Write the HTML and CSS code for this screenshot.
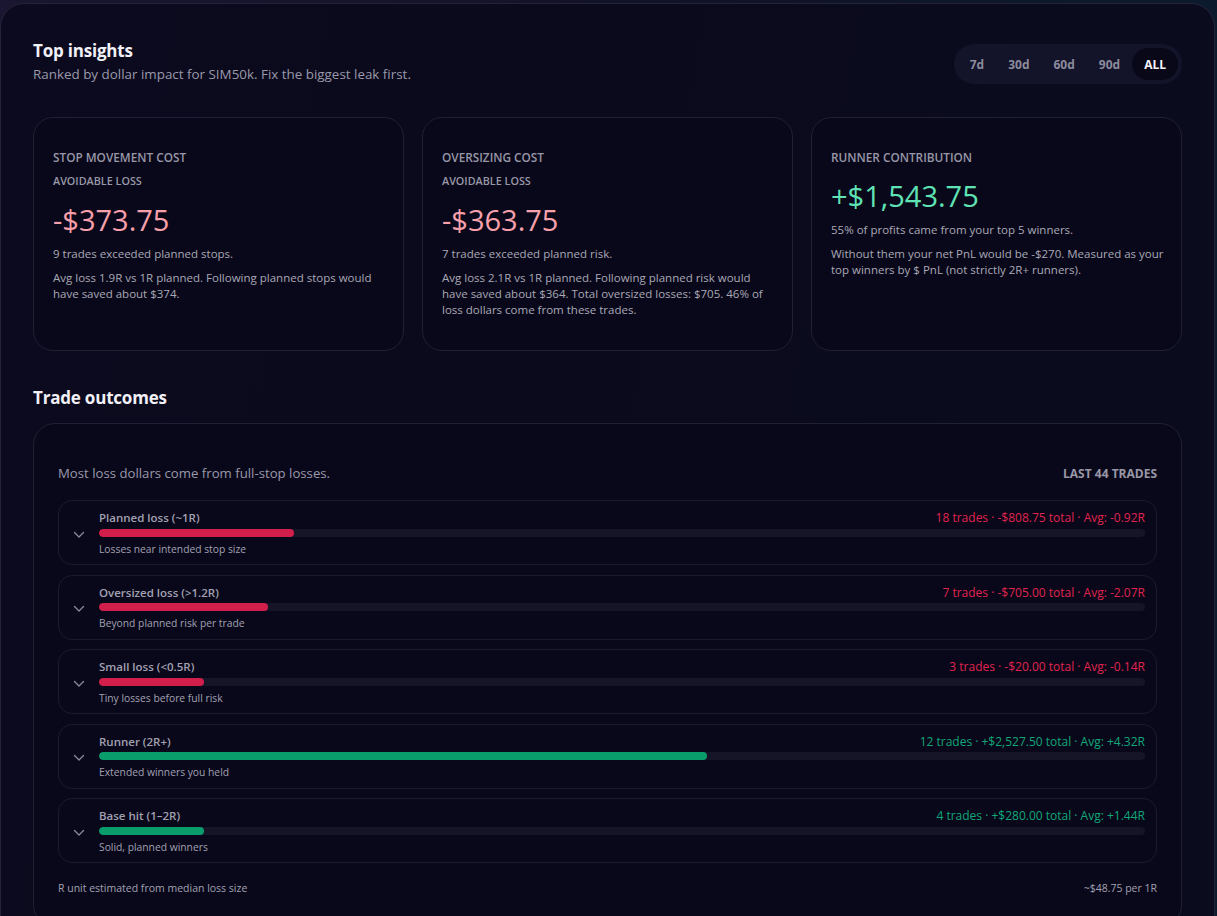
FILE: index.html
```html
<!DOCTYPE html>
<html lang="en">
<head>
<meta charset="utf-8">
<title>Top insights</title>
<link rel="stylesheet" href="styles.css">
</head>
<body>
<main class="panel">
  <header class="head">
    <div class="head-text">
      <h1 class="title">Top insights</h1>
      <p class="subtitle">Ranked by dollar impact for SIM50k. Fix the biggest leak first.</p>
    </div>
    <nav class="range">
      <button class="range-btn">7d</button>
      <button class="range-btn">30d</button>
      <button class="range-btn">60d</button>
      <button class="range-btn">90d</button>
      <button class="range-btn active">ALL</button>
    </nav>
  </header>

  <section class="cards">
    <article class="card">
      <div class="card-label">STOP MOVEMENT COST</div>
      <div class="card-sub">AVOIDABLE LOSS</div>
      <div class="card-value neg">-$373.75</div>
      <p class="card-line">9 trades exceeded planned stops.</p>
      <p class="card-note">Avg loss 1.9R vs 1R planned. Following planned stops would have saved about $374.</p>
    </article>
    <article class="card">
      <div class="card-label">OVERSIZING COST</div>
      <div class="card-sub">AVOIDABLE LOSS</div>
      <div class="card-value neg">-$363.75</div>
      <p class="card-line">7 trades exceeded planned risk.</p>
      <p class="card-note">Avg loss 2.1R vs 1R planned. Following planned risk would have saved about $364. Total oversized losses: $705. 46% of loss dollars come from these trades.</p>
    </article>
    <article class="card card-runner">
      <div class="card-label">RUNNER CONTRIBUTION</div>
      <div class="card-value pos">+$1,543.75</div>
      <p class="card-line">55% of profits came from your top 5 winners.</p>
      <p class="card-note">Without them your net PnL would be -$270. Measured as your top winners by $ PnL (not strictly 2R+ runners).</p>
    </article>
  </section>

  <h2 class="section-title">Trade outcomes</h2>
  <section class="outcomes">
    <div class="outcomes-head">
      <span class="outcomes-lead">Most loss dollars come from full-stop losses.</span>
      <span class="outcomes-count">LAST 44 TRADES</span>
    </div>

    <div class="rows">
      <div class="row">
        <svg class="chev" viewBox="0 0 12 8" width="12" height="8"><path d="M1.5 1.5 6 6l4.5-4.5" fill="none" stroke="currentColor" stroke-width="1.3" stroke-linecap="round" stroke-linejoin="round"/></svg>
        <div class="row-body">
          <div class="row-top"><span class="row-name">Planned loss (~1R)</span><span class="row-stat loss">18 trades · -$808.75 total · Avg: -0.92R</span></div>
          <div class="track"><div class="fill fill-loss" style="width:18.6%"></div></div>
          <div class="row-desc">Losses near intended stop size</div>
        </div>
      </div>
      <div class="row">
        <svg class="chev" viewBox="0 0 12 8" width="12" height="8"><path d="M1.5 1.5 6 6l4.5-4.5" fill="none" stroke="currentColor" stroke-width="1.3" stroke-linecap="round" stroke-linejoin="round"/></svg>
        <div class="row-body">
          <div class="row-top"><span class="row-name">Oversized loss (&gt;1.2R)</span><span class="row-stat loss">7 trades · -$705.00 total · Avg: -2.07R</span></div>
          <div class="track"><div class="fill fill-loss" style="width:16.2%"></div></div>
          <div class="row-desc">Beyond planned risk per trade</div>
        </div>
      </div>
      <div class="row">
        <svg class="chev" viewBox="0 0 12 8" width="12" height="8"><path d="M1.5 1.5 6 6l4.5-4.5" fill="none" stroke="currentColor" stroke-width="1.3" stroke-linecap="round" stroke-linejoin="round"/></svg>
        <div class="row-body">
          <div class="row-top"><span class="row-name">Small loss (&lt;0.5R)</span><span class="row-stat loss">3 trades · -$20.00 total · Avg: -0.14R</span></div>
          <div class="track"><div class="fill fill-loss" style="width:10%"></div></div>
          <div class="row-desc">Tiny losses before full risk</div>
        </div>
      </div>
      <div class="row">
        <svg class="chev" viewBox="0 0 12 8" width="12" height="8"><path d="M1.5 1.5 6 6l4.5-4.5" fill="none" stroke="currentColor" stroke-width="1.3" stroke-linecap="round" stroke-linejoin="round"/></svg>
        <div class="row-body">
          <div class="row-top"><span class="row-name">Runner (2R+)</span><span class="row-stat win">12 trades · +$2,527.50 total · Avg: +4.32R</span></div>
          <div class="track"><div class="fill fill-win" style="width:58.1%"></div></div>
          <div class="row-desc">Extended winners you held</div>
        </div>
      </div>
      <div class="row">
        <svg class="chev" viewBox="0 0 12 8" width="12" height="8"><path d="M1.5 1.5 6 6l4.5-4.5" fill="none" stroke="currentColor" stroke-width="1.3" stroke-linecap="round" stroke-linejoin="round"/></svg>
        <div class="row-body">
          <div class="row-top"><span class="row-name">Base hit (1–2R)</span><span class="row-stat win">4 trades · +$280.00 total · Avg: +1.44R</span></div>
          <div class="track"><div class="fill fill-win" style="width:10%"></div></div>
          <div class="row-desc">Solid, planned winners</div>
        </div>
      </div>
    </div>

    <div class="outcomes-foot">
      <span>R unit estimated from median loss size</span>
      <span>~$48.75 per 1R</span>
    </div>
  </section>
</main>
</body>
</html>
```

FILE: styles.css
```css
* { box-sizing: border-box; }

html, body {
  margin: 0;
  height: 100%;
}

body {
  background: linear-gradient(90deg, #1a1631 0%, #111328 55%, #0c1a2d 100%);
  font-family: "Open Sans", "Noto Sans", sans-serif;
  color: #a5a4b4;
  overflow: hidden;
}

.panel {
  margin: 3px 2px 0 0;
  border: 1px solid #24233a;
  border-radius: 24px;
  background: linear-gradient(100deg, #0c0a1e 0%, #0a0a1c 50%, #0a0c1e 100%);
  padding: 35px 32px 0 32px;
  min-height: 940px;
}

.head {
  display: flex;
  justify-content: space-between;
  align-items: flex-end;
}

.title {
  margin: 0;
  font-size: 17px;
  line-height: 24px;
  font-weight: 700;
  color: #f1f0f7;
  letter-spacing: -0.2px;
}

.subtitle {
  margin: 1px 0 0;
  font-size: 13.4px;
  line-height: 20px;
  color: #9a99ab;
}

.range {
  display: flex;
  padding: 4px;
  border-radius: 20px;
  background: #13132a;
}

.range-btn {
  border: 0;
  background: transparent;
  font-family: inherit;
  font-size: 12px;
  font-weight: 700;
  color: #8c8b9d;
  height: 32px;
  padding: 0 12px;
  border-radius: 16px;
}

.range-btn.active {
  background: #090818;
  color: #f4f3fa;
}

.cards {
  margin-top: 33px;
  display: grid;
  grid-template-columns: repeat(3, 1fr);
  gap: 18px;
}

.card {
  height: 234px;
  border: 1px solid #201f35;
  border-radius: 20px;
  background: #09081a;
  padding: 31px 19px 0 19px;
}

.card-runner {
  padding-right: 14px;
}

.card-label {
  font-size: 11.8px;
  line-height: 16px;
  font-weight: 600;
  color: #9897a7;
}

.card-sub {
  margin-top: 8px;
  font-size: 10.8px;
  line-height: 16px;
  font-weight: 600;
  color: #9897a7;
}

.card-value {
  margin-top: 12px;
  font-size: 29px;
  line-height: 38px;
  font-weight: 500;
}

.card-value.neg { color: #f7a0ab; }
.card-value.pos { color: #5fe3b4; }

.card-line {
  margin: 7px 0 0;
  font-size: 11.5px;
  line-height: 16px;
  color: #a9a8b6;
}

.card-note {
  margin: 8px 0 0;
  font-size: 11.5px;
  line-height: 16px;
  color: #a9a8b6;
}

.section-title {
  margin: 35px 0 0;
  font-size: 17px;
  line-height: 24px;
  font-weight: 700;
  color: #f1f0f7;
  letter-spacing: -0.2px;
}

.outcomes {
  margin-top: 13px;
  border: 1px solid #201f35;
  border-radius: 22px;
  background: #09081a;
  padding: 39px 24px 30px 24px;
}

.outcomes-head {
  display: flex;
  justify-content: space-between;
  align-items: center;
  height: 20px;
}

.outcomes-lead {
  font-size: 13.2px;
  color: #9a99ab;
}

.outcomes-count {
  font-size: 12px;
  font-weight: 700;
  color: #9897a7;
}

.rows {
  margin-top: 17px;
  display: flex;
  flex-direction: column;
  gap: 9.5px;
}

.row {
  display: flex;
  align-items: center;
  gap: 14px;
  height: 65px;
  border: 1px solid #1b1a2f;
  border-radius: 14px;
  padding: 0 11px 0 14px;
}

.chev {
  flex: 0 0 12px;
  color: #8c8b9d;
  margin-top: 4px;
}

.row-body {
  flex: 1;
  min-width: 0;
}

.row-top {
  display: flex;
  justify-content: space-between;
  align-items: center;
  height: 16px;
}

.row-name {
  font-size: 11.5px;
  font-weight: 600;
  color: #a2a1b2;
}

.row-stat {
  font-size: 12px;
}

.row-stat.loss { color: #e0244f; }
.row-stat.win { color: #12a779; }

.track {
  margin-top: 3px;
  height: 8px;
  border-radius: 4px;
  background: #161528;
  overflow: hidden;
}

.fill {
  height: 100%;
  border-radius: 4px;
}

.fill-loss { background: #d21e4b; }
.fill-win { background: #0a9d6c; }

.row-desc {
  margin-top: 5px;
  font-size: 10.3px;
  line-height: 14px;
  color: #a2a1b2;
}

.outcomes-foot {
  margin-top: 17px;
  display: flex;
  justify-content: space-between;
  font-size: 10.5px;
  line-height: 16px;
  color: #a2a1b2;
}
```
